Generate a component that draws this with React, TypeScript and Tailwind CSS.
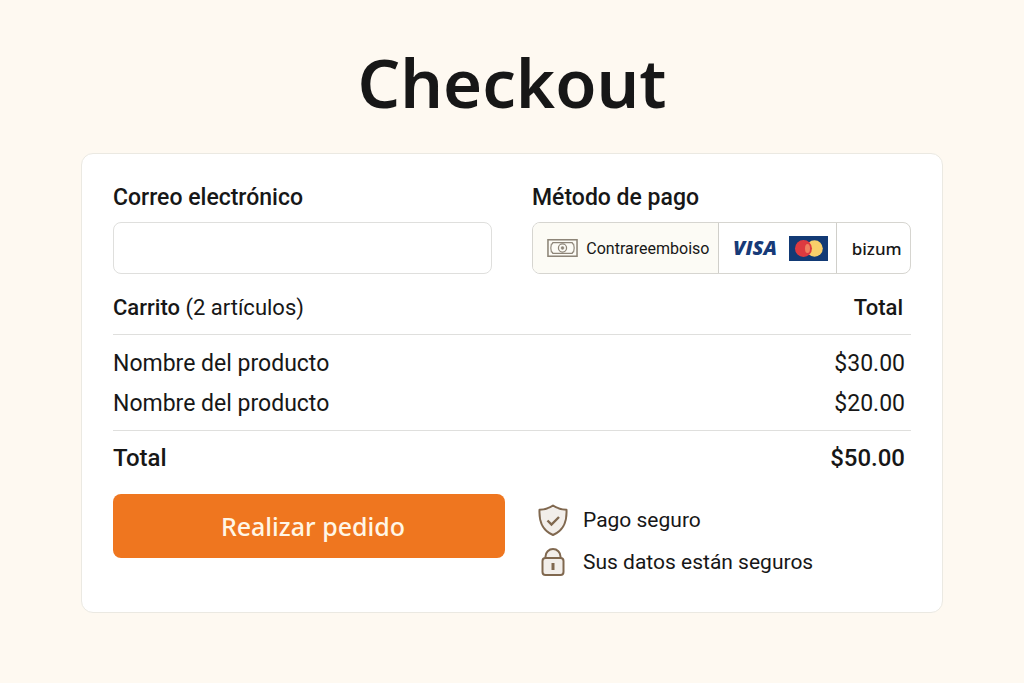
import type { ReactNode } from "react";

type Product = {
  id: number;
  name: string;
  price: number;
};

const products: Product[] = [
  { id: 1, name: "Nombre del producto", price: 30 },
  { id: 2, name: "Nombre del producto", price: 20 },
];

const formatPrice = (value: number) => `$${value.toFixed(2)}`;

export default function App() {
  const total = products.reduce((sum, product) => sum + product.price, 0);

  return (
    <main className="min-h-screen bg-[#fef9f1] px-6 pt-10 pb-16 font-['Roboto',sans-serif] text-[#171717]">
      <h1 className="text-center font-['Noto_Sans',sans-serif] text-[67px] leading-[84px] font-semibold">
        Checkout
      </h1>

      <form
        className="mx-auto mt-[29px] max-w-[862px] rounded-xl border border-[#ebe9e2] bg-white px-[31px] pt-7 pb-8"
        onSubmit={(e) => e.preventDefault()}
      >
        <div className="grid gap-10 md:grid-cols-2">
          <div>
            <label htmlFor="email" className="block text-[23px] leading-8 font-medium">
              Correo electrónico
            </label>
            <input
              id="email"
              type="email"
              className="mt-2 block h-13 w-full rounded-lg border border-[#dfdfdd] px-3 text-lg"
            />
          </div>

          <fieldset>
            <legend className="block text-[23px] leading-8 font-medium">Método de pago</legend>
            <div className="mt-2 flex h-13 overflow-hidden rounded-lg border border-[#d6d5d0]">
              <PaymentOption value="cod" defaultChecked>
                <BanknoteIcon />
                <span className="pt-0.5 text-base">Contrareemboiso</span>
              </PaymentOption>
              <PaymentOption value="card">
                <VisaLogo />
                <MastercardLogo />
              </PaymentOption>
              <PaymentOption value="bizum">
                <span className="pt-0.5 font-['Noto_Sans',sans-serif] text-[17px] font-medium">bizum</span>
              </PaymentOption>
            </div>
          </fieldset>
        </div>

        <table className="mt-2 w-full text-[23px] leading-8">
          <thead>
            <tr className="h-13 border-b border-[#dfdfdd]">
              <th scope="col" className="text-left text-[22px] font-normal">
                <span className="font-medium">Carrito</span> (2 artículos)
              </th>
              <th scope="col" className="pr-2 text-right text-[22px] font-medium">
                Total
              </th>
            </tr>
          </thead>
          <tbody className="border-b border-[#dfdfdd]">
            {products.map((product) => (
              <tr key={product.id} className="h-12 first:*:pt-3 last:*:pb-1">
                <td>{product.name}</td>
                <td className="pr-1.5 text-right">{formatPrice(product.price)}</td>
              </tr>
            ))}
          </tbody>
          <tfoot>
            <tr className="h-14 text-2xl">
              <th scope="row" className="text-left font-medium">
                Total
              </th>
              <td className="pr-1.5 text-right font-medium">{formatPrice(total)}</td>
            </tr>
          </tfoot>
        </table>

        <div className="mt-2 flex flex-wrap items-start gap-8">
          <button
            type="submit"
            className="h-16 w-full max-w-[392px] rounded-lg bg-[#ef761f] pt-0.5 pl-2 font-['Noto_Sans',sans-serif] text-[25px] font-medium text-[#fff6e6]"
          >
            Realizar pedido
          </button>
          <ul className="flex flex-col gap-1.5 pt-2 text-[21px] leading-9">
            <li className="flex items-center gap-3.5">
              <ShieldIcon />
              Pago seguro
            </li>
            <li className="flex items-center gap-3.5">
              <LockIcon />
              Sus datos están seguros
            </li>
          </ul>
        </div>
      </form>
    </main>
  );
}

function PaymentOption({
  value,
  defaultChecked,
  children,
}: {
  value: string;
  defaultChecked?: boolean;
  children: ReactNode;
}) {
  return (
    <label className="flex flex-auto cursor-pointer items-center justify-center gap-2 border-r border-[#d0cfca] pr-2 pl-3.5 last:border-r-0 has-checked:bg-[#fcfbf5]">
      <input type="radio" name="payment" value={value} defaultChecked={defaultChecked} className="sr-only" />
      {children}
    </label>
  );
}

function BanknoteIcon() {
  return (
    <svg width="31" height="20" viewBox="0 0 32 20" fill="none" stroke="#8d8578" aria-hidden="true">
      <rect x="1" y="1.5" width="30" height="17" strokeWidth="1.6" />
      <path
        d="M6 4.500h20c0 1 .5 1.500 1.500 1.500c.7 2.500.7 5.500 0 8c-1 0-1.500.5-1.500 1.500H6c0-1-.5-1.500-1.500-1.500c-.7-2.500-.7-5.500 0-8C5.500 6 6 5.500 6 4.500z"
        strokeWidth="1.2"
      />
      <circle cx="16" cy="10" r="4.2" strokeWidth="1.3" />
      <circle cx="16" cy="10" r="1.5" fill="#8d8578" strokeWidth="0.5" />
    </svg>
  );
}

function VisaLogo() {
  return (
    <span className="font-['Open_Sans',sans-serif] text-xl font-extrabold text-[#173a78] italic">VISA</span>
  );
}

function MastercardLogo() {
  return (
    <svg width="39" height="25" viewBox="0 0 39 25" className="ml-1" role="img" aria-label="Mastercard">
      <rect width="39" height="25" fill="#123a75" />
      <circle cx="25.5" cy="12.5" r="8.3" fill="#f8cf6a" />
      <circle cx="14.5" cy="12.5" r="8.5" fill="#dd3a40" />
      <ellipse cx="18.500" cy="12.500" rx="2.500" ry="4.500" fill="#f08060" />
    </svg>
  );
}

function ShieldIcon() {
  return (
    <svg width="32" height="34" viewBox="0 0 32 34" fill="none" stroke="#80684f" strokeWidth="2" aria-hidden="true">
      <path
        d="M16 2.500c4 3 8.500 4 13.500 4.300C30 18 27.500 27 16 32C4.500 27 2 18 2.500 6.800C7.500 6.500 12 5.500 16 2.500z"
        fill="#f2eeea"
        strokeLinejoin="round"
      />
      <path d="M10.500 17.500l4 4l7.500-7.500" strokeWidth="2.400" />
    </svg>
  );
}

function LockIcon() {
  return (
    <svg width="32" height="30" viewBox="0 0 32 30" fill="none" stroke="#80684f" strokeWidth="2" aria-hidden="true">
      <path d="M8.500 11V9.500a7.500 7.500 0 0 1 15 0V11" fill="#f2eeea" />
      <rect x="5.500" y="11" width="21" height="17" rx="3" fill="#f2eeea" />
      <path d="M16 16v7" strokeWidth="3" />
    </svg>
  );
}
